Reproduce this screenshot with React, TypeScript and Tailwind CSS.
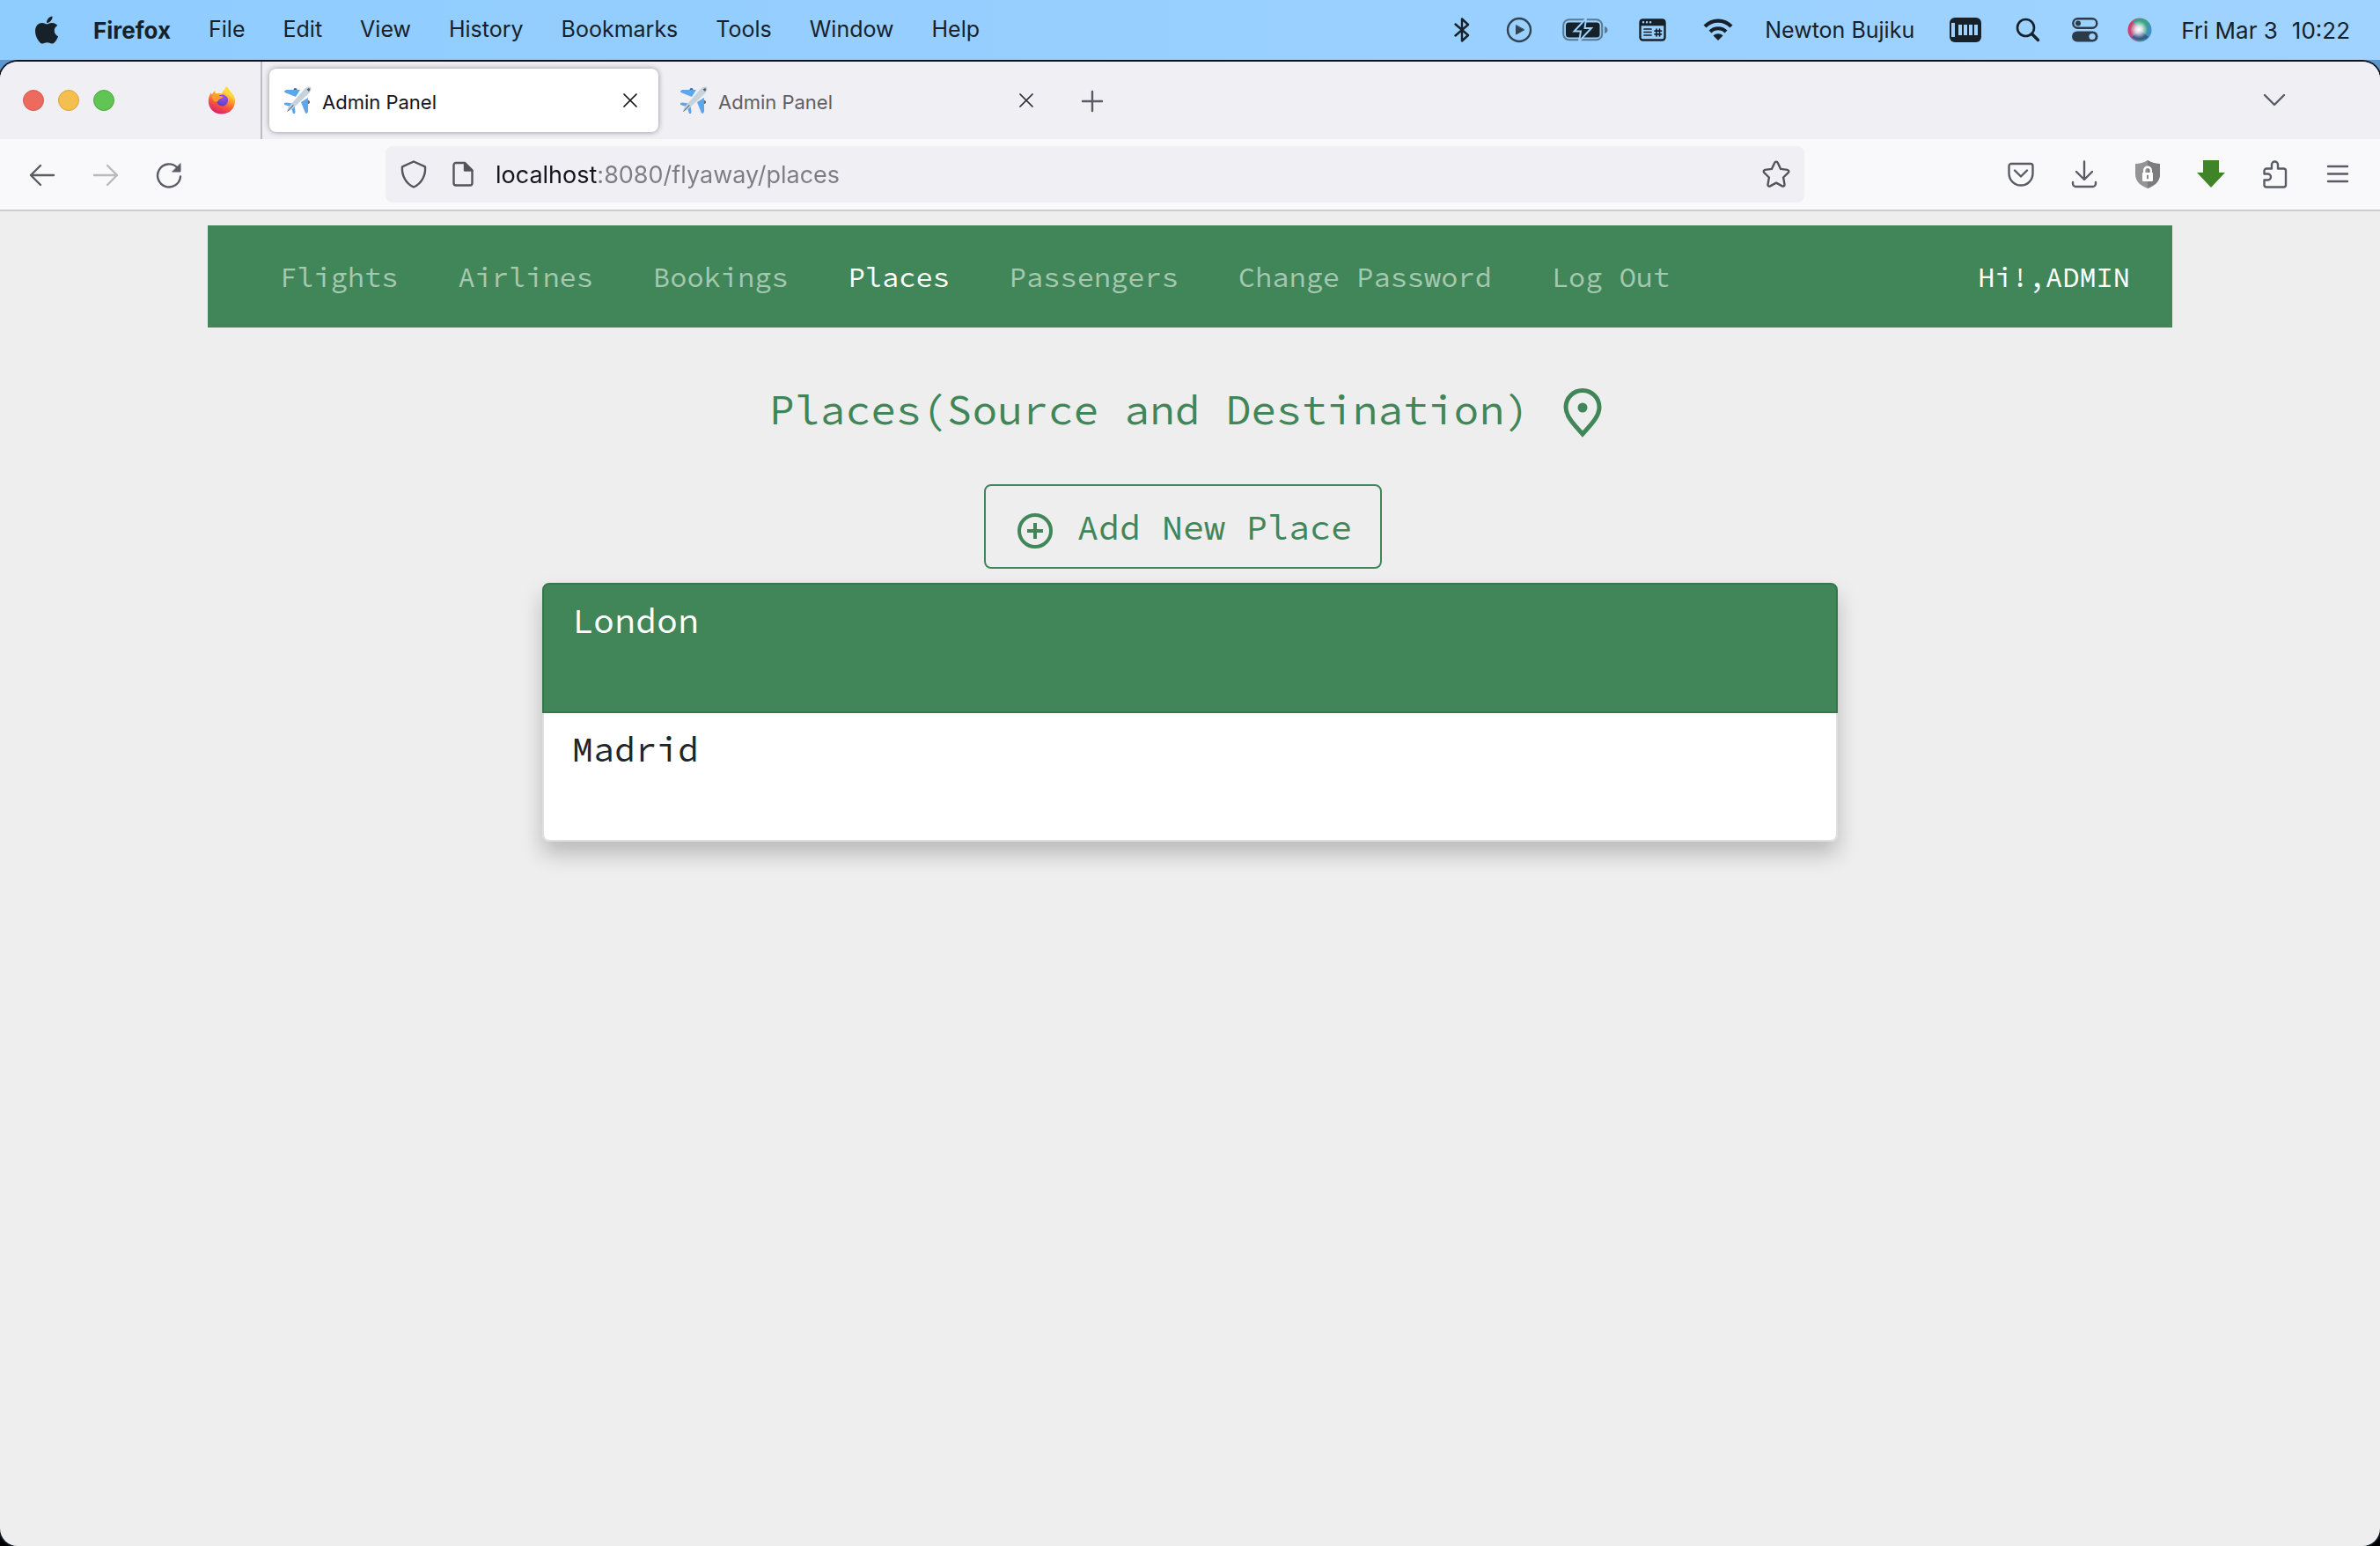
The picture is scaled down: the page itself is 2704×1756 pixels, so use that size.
import type { ReactNode } from "react";

const menus = ["File", "Edit", "View", "History", "Bookmarks", "Tools", "Window", "Help"];

const links = ["Flights", "Airlines", "Bookings", "Places", "Passengers", "Change Password", "Log Out"];

const places = ["London", "Madrid"];

function Icon({ w, h, box, children }: { w: number; h: number; box?: string; children: ReactNode }) {
  return (
    <svg
      width={w}
      height={h}
      viewBox={box ?? `0 0 ${w} ${h}`}
      fill="none"
      stroke="currentColor"
      strokeWidth="2.4"
      strokeLinecap="round"
      strokeLinejoin="round"
      className="block shrink-0"
      aria-hidden="true"
    >
      {children}
    </svg>
  );
}

function AppleLogo() {
  return (
    <Icon w={26} h={32} box="4 30 376 450">
      <path
        fill="currentColor"
        stroke="none"
        d="M318.7 268.7c-.2-36.700 16.400-64.400 50-84.800-18.800-26.900-47.200-41.700-84.700-44.600-35.500-2.800-74.300 20.700-88.500 20.700-15 0-49.400-19.700-76.400-19.700C63.300 141.200 4 184.800 4 273.500q0 39.300 14.400 81.200c12.800 36.700 59 126.700 107.200 125.200 25.200-.6 43-17.900 75.800-17.900 31.800 0 48.300 17.900 76.400 17.900 48.600-.7 90.400-82.500 102.600-119.300-65.200-30.700-61.700-90-61.700-91.900zm-56.600-164.200c27.300-32.400 24.800-61.900 24-72.500-24.100 1.400-52 16.400-67.900 34.900-17.500 19.800-27.800 44.300-25.600 71.900 26.100 2 49.900-11.400 69.500-34.300z"
      />
    </Icon>
  );
}

function FirefoxLogo() {
  return (
    <Icon w={32} h={32}>
      <defs>
        <linearGradient id="ffBody" x1="0.75" y1="0.05" x2="0.35" y2="1">
          <stop offset="0" stopColor="#fff04f" />
          <stop offset="0.35" stopColor="#ffb02e" />
          <stop offset="0.65" stopColor="#fb5a37" />
          <stop offset="1" stopColor="#d81f6f" />
        </linearGradient>
        <radialGradient id="ffGlobe" cx="0.6" cy="0.3" r="0.8">
          <stop offset="0" stopColor="#a24cf0" />
          <stop offset="1" stopColor="#4a3fc0" />
        </radialGradient>
      </defs>
      <path
        stroke="none"
        fill="url(#ffBody)"
        d="M21 0c3 2.500 3.500 5 6 7.500 2.500 2 4 5.500 4 9.500 0 8.500-6.500 14.500-15 14.500S.800 25.500.800 17c0-4 1.200-7 3-10 .2 1 .4 1.700 1 2.500C6 7 7 6 8.500 4.800c-.3 1.700 0 2.700.8 3.400 2-.7 4.500-.7 6.700.3C16.500 5 19.500 4 21 0z"
      />
      <circle cx="16.500" cy="16" r="6.500" fill="url(#ffGlobe)" stroke="none" />
      <path stroke="none" fill="#ff9c2b" d="M5 10.500c3-2 6-1.500 8 .5l4.500.5c0 2-2.500 2.200-4 3-1.500 1-1 2.500-3 3-3 .5-6-2.500-5.500-7z" />
      <path stroke="none" fill="#ffd83f" d="M21 0c3 2.500 3.500 5 6 7.500 2 2 3 5 2.500 8-1.500-3-3.500-4.500-6-5.500-3-1.200-5.500-3-4-6.500.6-1.200 1.300-2 1.500-3.500z" />
    </Icon>
  );
}

function Plane() {
  return (
    <Icon w={32} h={32}>
      <g stroke="none">
        <circle cx="13.500" cy="4" r="2" fill="#56616b" />
        <circle cx="28" cy="18" r="2" fill="#56616b" />
        <path fill="#5ea6ea" d="M1 5.500 3 4h16l-5 8L1.500 7z" />
        <path fill="#5ea6ea" d="M26.500 31 28 29V13l-8 5 5 12.500z" />
        <path fill="#5ea6ea" d="M1 19l2-.5 8 1-2 4-8-2.500zM13 31l.5-2-1-8-4 2 2.500 8z" />
        <path fill="#c8d2da" d="M31 1c1 1 .5 4-2 7L12 24c-3 3-6 4.500-7 4s0-4 3-7L24 3c3-2.500 6-3 7-2z" />
        <path fill="#56616b" d="M26.500 3.500 29 2l1.500 1.500L29 6zM4 28.500l7-7.500.8.800-7 7z" />
      </g>
    </Icon>
  );
}

function Close() {
  return (
    <Icon w={16} h={16}>
      <path strokeWidth="1.700" d="M1 1l14 14M15 1 1 15" />
    </Icon>
  );
}

function SystemIcons() {
  return (
    <>
      <Icon w={18} h={30}>
        <path d="M1.500 8.500 16 21 9 27.500V2.500L16 9 1.500 21.500" />
      </Icon>
      <span className="ml-[41px] opacity-80">
        <Icon w={30} h={30}>
          <circle cx="15" cy="15" r="13" />
          <path d="M11.500 10v10l9-5z" fill="currentColor" strokeWidth="1" />
        </Icon>
      </span>
      <span className="ml-[34px]">
        <Icon w={52} h={26}>
          <rect x="1.200" y="1.200" width="44" height="23" rx="6.500" opacity=".5" strokeWidth="2" />
          <path d="M48 9v8c2-.5 3.500-2 3.500-4S50 9.500 48 9z" fill="currentColor" stroke="none" opacity=".5" />
          <rect x="4" y="4.500" width="38.500" height="17" rx="3.500" fill="currentColor" stroke="none" />
          <path d="M27 0 13.500 14.500H21L19 26l14-15h-7.500z" fill="currentColor" stroke="#9dd1fe" strokeWidth="2" strokeLinejoin="miter" />
        </Icon>
      </span>
      <span className="ml-[35px]">
        <Icon w={32} h={26}>
          <rect x="1.500" y="1.500" width="28" height="23" rx="3" />
          <path d="M2 2h27v5.500H2z" fill="currentColor" strokeWidth="1.500" />
          <path d="M5 4.300h.1M9 4.300h.1M13 4.300h.1" stroke="#9dd1fe" strokeWidth="2.400" />
          <path d="M6 12h8M6 15.500h8M6 19h8" strokeWidth="1.700" />
          <path d="M20 12v8M23.500 12v8M18 14.200h7.500M18 17.800h7.500" strokeWidth="1.700" />
        </Icon>
      </span>
      <span className="ml-10">
        <Icon w={36} h={28}>
          <path d="M3 10c8.500-8.500 21.500-8.500 30 0" strokeWidth="4.200" strokeLinecap="butt" />
          <path d="M9 16c5-5 13-5 18 0" strokeWidth="4.200" strokeLinecap="butt" />
          <path d="M12.500 20.500c3-3 8-3 11 0L18 26z" fill="currentColor" stroke="none" />
        </Icon>
      </span>
      <span className="ml-[35px] pt-[2px]">Newton Bujiku</span>
      <span className="ml-10">
        <Icon w={36} h={28}>
          <rect width="36" height="28" rx="6" fill="currentColor" stroke="none" />
          <path d="M4 6v16" stroke="#9fd2fe" strokeWidth="4" strokeLinecap="butt" />
          <path d="M12 8v12M18 8v12M24 8v12M30 8v12" stroke="#9fd2fe" strokeWidth="4" strokeLinecap="butt" />
        </Icon>
      </span>
      <span className="ml-[39px]">
        <Icon w={28} h={28}>
          <circle cx="11.500" cy="11.500" r="9.500" strokeWidth="2.600" />
          <path d="M18.500 18.500l7 7" strokeWidth="3.400" />
        </Icon>
      </span>
      <span className="ml-[36px] opacity-85">
        <Icon w={30} h={28}>
          <rect x="1.300" y="1.300" width="27" height="10.400" rx="5.200" />
          <circle cx="7" cy="6.500" r="3" fill="currentColor" stroke="none" />
          <rect y="15.500" width="29.500" height="12" rx="6" fill="currentColor" stroke="none" />
          <circle cx="23" cy="21.500" r="3.600" fill="#9fd2fe" stroke="none" />
        </Icon>
      </span>
      <span className="ml-[33px]">
        <Icon w={28} h={28}>
          <defs>
            <linearGradient id="siri" x1="0" y1="0.300" x2="1" y2="0.600">
              <stop offset="0" stopColor="#e0335f" />
              <stop offset="0.450" stopColor="#8a6f9a" />
              <stop offset="0.700" stopColor="#3c9c8a" />
              <stop offset="1" stopColor="#3d8ee0" />
            </linearGradient>
            <radialGradient id="siriGlow">
              <stop offset="0" stopColor="#fff" />
              <stop offset="0.400" stopColor="#fff" stopOpacity=".75" />
              <stop offset="1" stopColor="#fff" stopOpacity="0" />
            </radialGradient>
          </defs>
          <circle cx="14" cy="14" r="13.500" fill="url(#siri)" stroke="none" />
          <path d="M6 5C11 0 19 0 23 5l-8 7z" fill="#3aa583" stroke="none" />
          <path d="M5 22c5 5 14 5 19 0l-9-7z" fill="#3a5c8a" stroke="none" />
          <circle cx="13" cy="13.500" r="10" fill="url(#siriGlow)" stroke="none" />
        </Icon>
      </span>
    </>
  );
}

function MenuBar() {
  return (
    <header className="flex h-[68px] items-center bg-linear-to-r from-[#8fccff] to-[#a0d3ff] pr-[34px] pl-[40px] text-[25px] text-[#17212a]">
      <AppleLogo />
      <nav aria-label="Application menu" className="ml-10 flex h-full items-center gap-[43px]">
        <button className="text-[26px] font-bold">Firefox</button>
        {menus.map((m) => (
          <button key={m}>{m}</button>
        ))}
      </nav>
      <div className="ml-auto flex items-center">
        <SystemIcons />
        <time className="ml-[33px] flex gap-4 text-[26px]">
          <span>Fri Mar 3</span>
          <span>10:22</span>
        </time>
      </div>
    </header>
  );
}

function TabStrip() {
  return (
    <div className="flex h-[88px] items-center bg-[#f0eff4] text-[22px]">
      <div className="flex h-full w-[298px] items-center border-r-2 border-[#bdbcc2] pl-[26px]">
        <div className="flex gap-4">
          <button aria-label="Close window" className="size-6 rounded-full border border-[#d65a50] bg-[#ed6a5e]" />
          <button aria-label="Minimize window" className="size-6 rounded-full border border-[#dba43b] bg-[#f5bf4f]" />
          <button aria-label="Zoom window" className="size-6 rounded-full border border-[#51a83f] bg-[#61c554]" />
        </div>
        <button aria-label="Firefox View" className="ml-[106px]">
          <FirefoxLogo />
        </button>
      </div>
      <div className="ml-2 flex h-[72px] w-[442px] items-center rounded-lg bg-white pr-6 pl-4 text-[#15141a] shadow-[0_0_6px_rgba(0,0,0,0.4)]">
        <Plane />
        <span className="ml-3 pt-1">Admin Panel</span>
        <button aria-label="Close tab" className="ml-auto">
          <Close />
        </button>
      </div>
      <div className="ml-2 flex h-[72px] w-[442px] items-center pr-6 pl-4 text-[#5f5e64]">
        <Plane />
        <span className="ml-3 pt-1">Admin Panel</span>
        <button aria-label="Close tab" className="ml-auto text-[#2b2a33]">
          <Close />
        </button>
      </div>
      <button aria-label="New tab" className="ml-[30px] pt-[2px] text-[#5b5b66]">
        <Icon w={26} h={26}>
          <path d="M13 2v22M2 13h22" />
        </Icon>
      </button>
      <button aria-label="List all tabs" className="mr-[107px] ml-auto text-[#5b5b66]">
        <Icon w={26} h={16}>
          <path d="M2 2l11 11L24 2" />
        </Icon>
      </button>
    </div>
  );
}

function Toolbar() {
  return (
    <div className="flex h-[82px] items-center border-b-2 border-[#cccccf] bg-[#f9f9fb] text-[#5b5b66]">
      <div className="flex w-[438px] items-center gap-[42px] pt-[2px] pl-[33px]">
        <button aria-label="Back">
          <Icon w={30} h={28}>
            <path d="M13 3 2 14l11 11M2 14h26" />
          </Icon>
        </button>
        <button aria-label="Forward" className="opacity-40">
          <Icon w={30} h={28}>
            <path d="M17 3l11 11-11 11M28 14H2" />
          </Icon>
        </button>
        <button aria-label="Reload">
          <Icon w={30} h={30}>
            <path d="M28 16.500A13 13 0 1 1 24 6" />
            <path d="M28 2v9h-9z" fill="currentColor" strokeWidth="1" />
          </Icon>
        </button>
      </div>
      <div className="flex h-16 flex-1 items-center rounded-lg bg-[#f0eff4] px-4 text-[#55545b]">
        <Icon w={32} h={32}>
          <path d="M16 1.500l13 5.800c.8 9-3.500 19-13 23.200C6.500 26.300 2.200 16.300 3 7.300z" />
        </Icon>
        <span className="ml-[25px]">
          <Icon w={32} h={30}>
            <path d="M7 2h10l8.500 8.500V25a2.500 2.500 0 0 1-2.500 2.500H7A2.500 2.500 0 0 1 4.500 25V4.500A2.500 2.500 0 0 1 7 2z" />
            <path d="M17 2v8.500h8.500z" fill="currentColor" />
          </Icon>
        </span>
        <input
          aria-label="Address"
          defaultValue="localhost:8080/flyaway/places"
          className="ml-5 min-w-0 flex-1 bg-[linear-gradient(90deg,#15141a_117px,#7d7c82_117px)] bg-clip-text pt-[3px] text-[27px] text-transparent outline-none"
        />
        <button aria-label="Bookmark this page">
          <Icon w={32} h={32}>
            <path d="M14.300 2.700c.7-1.400 2.700-1.400 3.400 0l3.400 7.200 7.600 1c1.500.2 2.100 2.100 1 3.200l-5.600 5.400 1.400 7.900c.3 1.500-1.300 2.700-2.700 2L16 25.600l-6.800 3.800c-1.400.7-3-.5-2.700-2l1.400-7.900-5.600-5.400c-1.100-1.100-.5-3 1-3.200l7.600-1z" />
          </Icon>
        </button>
      </div>
      <div className="flex w-[654px] items-center justify-end gap-10 pr-[32px]">
        <button aria-label="Save to Pocket">
          <Icon w={32} h={28}>
            <path d="M5 2h22a2.500 2.500 0 0 1 2.500 2.500V13a13.500 13.500 0 0 1-27 0V4.500A2.500 2.500 0 0 1 5 2z" />
            <path d="M9 9.500l7 7 7-7" />
          </Icon>
        </button>
        <button aria-label="Downloads">
          <Icon w={32} h={32}>
            <path d="M16 1.500v20M7 13l9 9 9-9M3 25v1.500A3.500 3.500 0 0 0 6.500 30h19a3.500 3.500 0 0 0 3.500-3.500V25" />
          </Icon>
        </button>
        <button aria-label="Privacy protection">
          <Icon w={32} h={32}>
            <path fill="#949494" stroke="none" d="M16 0c4 2.500 9 4 14 4v12c0 8-6 13-14 16C8 29 2 24 2 16V4c5 0 10-1.500 14-4z" />
            <path fill="#7c7c7c" stroke="none" d="M16 0c4 2.500 9 4 14 4v12c0 8-6 13-14 16z" />
            <rect x="10" y="14" width="12" height="10" rx="1" fill="#fff" stroke="none" />
            <path d="M12.200 14v-2.500a3.800 3.800 0 0 1 7.600 0V14" stroke="#fff" />
            <path d="M16 17.500v3" stroke="#7c7c7c" strokeWidth="1.800" />
          </Icon>
        </button>
        <button aria-label="Video download">
          <Icon w={32} h={32}>
            <path fill="#3f8527" stroke="none" d="M7 0h18v14h7L16 31 0 14h7z" />
          </Icon>
        </button>
        <button aria-label="Extensions">
          <Icon w={32} h={32}>
            <path d="M7 9.500h6V5a3.500 3.500 0 0 1 7 0v4.500h6.500A2.500 2.500 0 0 1 29 12v16a2.500 2.500 0 0 1-2.500 2.500H7A2.500 2.500 0 0 1 4.500 28v-5.500h4a3.500 3.500 0 0 0 0-7h-4V12A2.500 2.500 0 0 1 7 9.500z" />
          </Icon>
        </button>
        <button aria-label="Open menu">
          <Icon w={32} h={24}>
            <path d="M5 3h22M5 11.500h22M5 20h22" />
          </Icon>
        </button>
      </div>
    </div>
  );
}

function PlacesPage() {
  return (
    <main className="px-[236px] pt-4 font-['Source_Code_Pro','DejaVu_Sans_Mono',monospace] font-[450]">
      <nav aria-label="Main" className="flex h-[116px] items-center gap-[68px] bg-[#418658] pt-[2px] pr-12 pl-[82px] text-[32px] text-white">
        {links.map((l) => (
          <a key={l} href="#" aria-current={l === "Places" ? "page" : undefined} className={l === "Places" ? "" : "text-[#a6c8b1]"}>
            {l}
          </a>
        ))}
        <span className="ml-auto">Hi!,ADMIN</span>
      </nav>

      <div className="flex flex-col items-center text-[#418658]">
        <h1 className="mt-[57px] mr-2 flex items-center gap-9 text-[48px] leading-[60px]">
          Places(Source and Destination)
          <span className="pt-3">
            <Icon w={48} h={60}>
              <path strokeWidth="5" strokeLinejoin="miter" d="M24 52C12 39 5 31 5 21.500a19 19 0 0 1 38 0C43 31 36 39 24 52z" />
              <circle cx="24" cy="22" r="5.500" fill="currentColor" stroke="none" />
            </Icon>
          </span>
        </h1>
        <button className="mt-[49px] mr-4 flex h-24 items-center rounded-lg border-2 border-[#418658] px-8 pt-[2px] text-[40px]">
          <span className="mr-6 pt-2">
            <Icon w={48} h={48}>
              <circle cx="24" cy="24" r="18" strokeWidth="4" />
              <path d="M24 15v18M15 24h18" strokeWidth="4" strokeLinecap="butt" />
            </Icon>
          </span>
          Add New Place
        </button>
      </div>

      <ul className="mx-[380px] mt-4 rounded-lg text-[40px] leading-[60px] shadow-[0_14px_24px_rgba(0,0,0,0.22)]">
        {places.map((p, i) => (
          <li
            key={p}
            className={
              i === 0
                ? "h-[148px] rounded-t-lg border-2 border-[#37774d] bg-[#418658] px-8 pt-[11px] text-white"
                : "h-[146px] rounded-b-lg border-2 border-t-0 border-[#dfdfdf] bg-white px-8 pt-[11px] text-[#212529]"
            }
          >
            {p}
          </li>
        ))}
      </ul>
    </main>
  );
}

export default function App() {
  return (
    <div className="flex min-h-screen flex-col bg-linear-to-b from-[#5c96cb] from-10% to-black to-90% font-['Inter','Liberation_Sans',sans-serif]">
      <MenuBar />
      <div className="mt-[2px] flex-1 overflow-hidden rounded-[20px] bg-[#eeeeee] shadow-[0_0_0_2px_#0c1622]">
        <TabStrip />
        <Toolbar />
        <PlacesPage />
      </div>
    </div>
  );
}
